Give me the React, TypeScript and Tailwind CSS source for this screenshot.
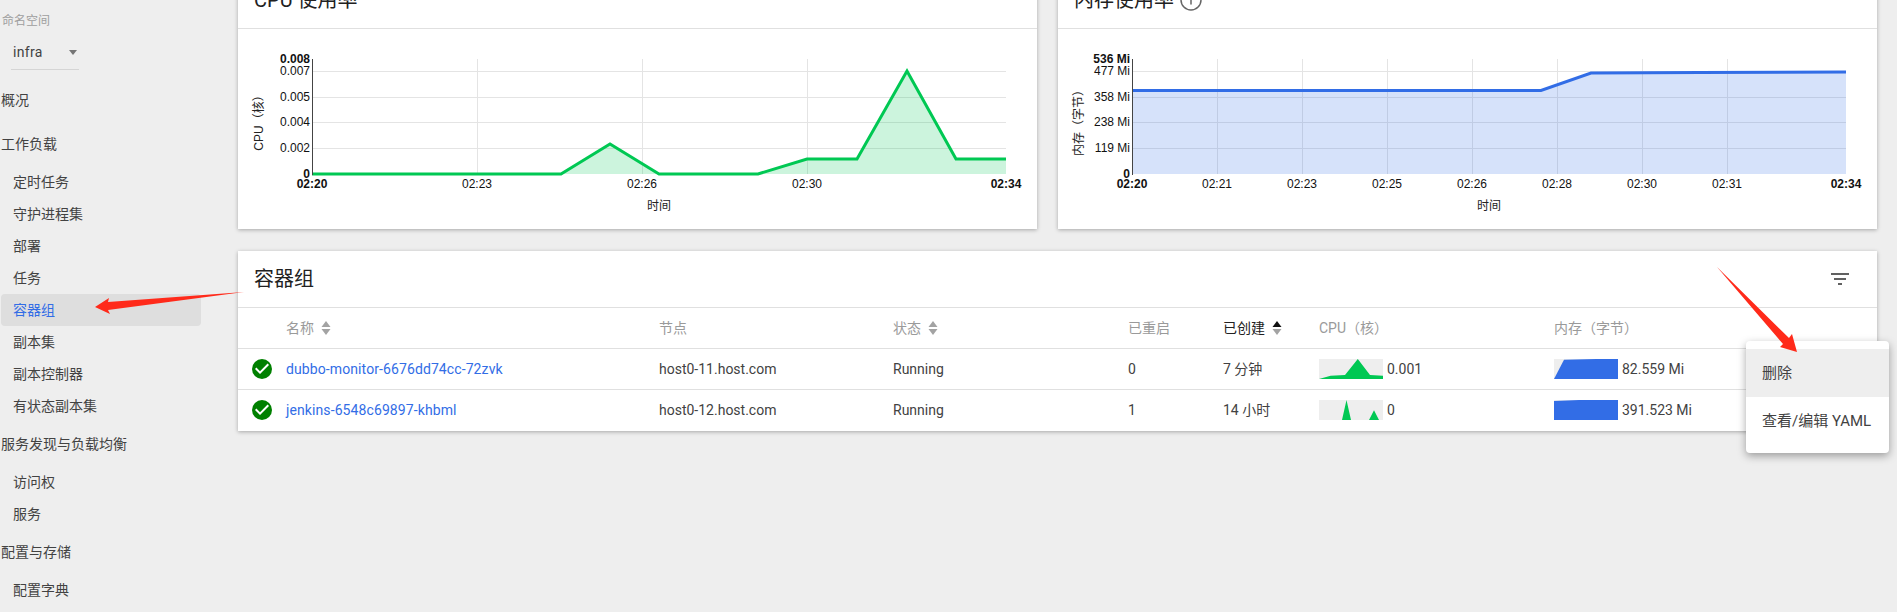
import React from 'react';
import { Info } from 'lucide-react';

const GREEN = '#00c853';
const BLUE = '#326de6';

interface ChartProps {
  box: string;
  color: string;
  yTitle: string;
  left: number;
  right: number;
  yTicks: { y: number; label: string; bold?: boolean }[];
  xTicks: { x: number; label: string; bold?: boolean }[];
  hLines: number[];
  points: [number, number][];
}

function UsageChart({ box, color, yTitle, left, right, yTicks, xTicks, hLines, points }: ChartProps) {
  const top = 59;
  const bottom = 174;
  const line = points.map(p => p.join(',')).join(' ');
  const last = points[points.length - 1];
  const area = `${left},${bottom} ${line} ${last[0]},${bottom}`;

  return (
    <svg viewBox={box} className="block h-[200px] w-full font-['Liberation_Sans','Noto_Sans_CJK_SC',sans-serif] text-[12px]">
      {hLines.map(y => (
        <line key={y} x1={left} x2={right} y1={y + 0.5} y2={y + 0.5} stroke="#e4e4e4" />
      ))}
      {xTicks.filter(t => !t.bold).map(t => (
        <line key={t.x} x1={t.x + 0.5} x2={t.x + 0.5} y1={top} y2={bottom} stroke="#e4e4e4" />
      ))}
      <polygon points={area} fill={color} fillOpacity={0.2} />
      <polyline points={line} fill="none" stroke={color} strokeWidth={3} />
      <line x1={left + 0.5} x2={left + 0.5} y1={top} y2={bottom + 1} stroke="#444" />
      {yTicks.map(t => (
        <text key={t.label} x={left - 2} y={t.y + 4} textAnchor="end" fill="#111" fontWeight={t.bold ? 700 : 400}>
          {t.label}
        </text>
      ))}
      {xTicks.map(t => (
        <text key={t.label} x={t.x} y={188} textAnchor="middle" fill="#111" fontWeight={t.bold ? 700 : 400}>
          {t.label}
        </text>
      ))}
      <text x={(left + right) / 2} y={210} textAnchor="middle" fill="#222">时间</text>
      <text
        transform={`translate(${left - 49} 120) rotate(-90)`}
        textAnchor="middle"
        fill="#222"
      >
        {yTitle}
      </text>
    </svg>
  );
}

function Card({ className = '', children }: { className?: string; children: React.ReactNode }) {
  return (
    <div className={`bg-white shadow-[0_1px_4px_rgba(0,0,0,0.3)] ${className}`}>
      {children}
    </div>
  );
}

function CardTitle({ children }: { children: React.ReactNode }) {
  return (
    <div className="flex h-[57px] items-center border-b border-[#e0e0e0] pl-4 pr-[27px] text-[20px] text-[#212121]">
      {children}
    </div>
  );
}

function NavHeader({ label }: { label: string }) {
  return <div className="flex h-11 items-center text-[#424242]">{label}</div>;
}

function NavItem({ label, active }: { label: string; active?: boolean }) {
  return (
    <div className={`flex h-8 items-center rounded-sm pl-3 ${active ? 'bg-[#dedede] text-[#326de6]' : 'text-[#424242]'}`}>
      {label}
    </div>
  );
}

function SortIcon({ active }: { active?: boolean }) {
  return (
    <svg width="10" height="15" viewBox="0 0 10 15" className="ml-[7px]">
      <path d="M5 0l4.5 6h-9z" fill={active ? '#111' : '#a3a3a3'} />
      <path d="M5 14l4.5-6h-9z" fill="#a3a3a3" />
    </svg>
  );
}

function StatusIcon() {
  return (
    <svg width="24" height="24" viewBox="0 0 24 24">
      <circle cx="12" cy="12" r="10" fill="#008000" />
      <path d="M10 17l-5-5 1.41-1.41L10 14.17l7.59-7.59L19 8l-9 9z" fill="#fff" />
    </svg>
  );
}

function Spark({ points, color }: { points: string; color: string }) {
  return (
    <svg width="64" height="20" viewBox="0 0 64 20" className="mr-1 bg-[#eeeeee]">
      <polygon points={points} fill={color} />
    </svg>
  );
}

const rows = [
  {
    name: 'dubbo-monitor-6676dd74cc-72zvk',
    node: 'host0-11.host.com',
    restarts: '0',
    created: '7 分钟',
    cpu: '0.001',
    mem: '82.559 Mi',
    cpuSpark: '0,20 11.6,16.7 26,16 38.8,0 51,16 64,16.7 64,20',
    memSpark: '0,20 10,0.7 42,0 64,0 64,20',
  },
  {
    name: 'jenkins-6548c69897-khbml',
    node: 'host0-12.host.com',
    restarts: '1',
    created: '14 小时',
    cpu: '0',
    mem: '391.523 Mi',
    cpuSpark: '23,20 27.5,0 32,20 50,20 55,10.3 60,20',
    memSpark: '0,1 25,0 64,0 64,20 0,20',
  },
];

export default function App() {
  return (
    <div className="relative flex h-[612px] w-[1897px] overflow-hidden bg-[#eeeeee] font-['Roboto','Noto_Sans_CJK_SC',sans-serif] text-[14px]">
      {/* Sidebar */}
      <aside className="w-[238px] shrink-0 pl-px">
        <div className="w-[200px]">
          <div className="mt-3 flex h-[18px] items-center pl-px text-[12px] text-[#9e9e9e]">命名空间</div>
          <div className="ml-[10px] flex h-10 w-[68px] items-center justify-between border-b border-[#d5d5d5] px-[2px] pt-[6px] text-[#424242]">
            <span className="tracking-[0.3px]">infra</span>
            <span className="h-0 w-0 border-x-[4.5px] border-t-[5px] border-x-transparent border-t-[#757575]" />
          </div>
          <div className="h-2" />
          <NavHeader label="概况" />
          <NavHeader label="工作负载" />
          <NavItem label="定时任务" />
          <NavItem label="守护进程集" />
          <NavItem label="部署" />
          <NavItem label="任务" />
          <NavItem label="容器组" active />
          <NavItem label="副本集" />
          <NavItem label="副本控制器" />
          <NavItem label="有状态副本集" />
          <NavHeader label="服务发现与负载均衡" />
          <NavItem label="访问权" />
          <NavItem label="服务" />
          <NavHeader label="配置与存储" />
          <NavItem label="配置字典" />
        </div>
      </aside>

      {/* Main content, scrolled so the chart headers are cut off at the top */}
      <main className="-mt-[28px] flex w-[1639px] shrink-0 flex-col gap-[22px]">
        <div className="flex gap-[21px]">
          <Card className="w-[799px]">
            <CardTitle>CPU 使用率</CardTitle>
            <UsageChart
              box="238 29 799 200"
              color={GREEN}
              yTitle="CPU（核）"
              left={312}
              right={1006}
              hLines={[71, 97, 122, 148]}
              yTicks={[
                { y: 59, label: '0.008', bold: true },
                { y: 71, label: '0.007' },
                { y: 97, label: '0.005' },
                { y: 122, label: '0.004' },
                { y: 148, label: '0.002' },
                { y: 174, label: '0', bold: true },
              ]}
              xTicks={[
                { x: 312, label: '02:20', bold: true },
                { x: 477, label: '02:23' },
                { x: 642, label: '02:26' },
                { x: 807, label: '02:30' },
                { x: 1006, label: '02:34', bold: true },
              ]}
              points={[[312, 174], [561, 174], [610, 144], [659, 174], [758, 174], [807, 159], [857, 159], [907, 71], [956, 159], [1006, 159]]}
            />
          </Card>
          <Card className="w-[819px]">
            <CardTitle>
              内存使用率
              <Info className="ml-[5px] text-[#666666]" size={24} strokeWidth={1.5} />
            </CardTitle>
            <UsageChart
              box="1058 29 819 200"
              color={BLUE}
              yTitle="内存（字节）"
              left={1132}
              right={1846}
              hLines={[71, 97, 122, 148]}
              yTicks={[
                { y: 59, label: '536 Mi', bold: true },
                { y: 71, label: '477 Mi' },
                { y: 97, label: '358 Mi' },
                { y: 122, label: '238 Mi' },
                { y: 148, label: '119 Mi' },
                { y: 174, label: '0', bold: true },
              ]}
              xTicks={[
                { x: 1132, label: '02:20', bold: true },
                { x: 1217, label: '02:21' },
                { x: 1302, label: '02:23' },
                { x: 1387, label: '02:25' },
                { x: 1472, label: '02:26' },
                { x: 1557, label: '02:28' },
                { x: 1642, label: '02:30' },
                { x: 1727, label: '02:31' },
                { x: 1846, label: '02:34', bold: true },
              ]}
              points={[[1132, 90.5], [1541, 90.5], [1591, 73], [1700, 72.5], [1846, 72]]}
            />
          </Card>
        </div>

        <Card>
          <div className="flex h-[57px] items-center justify-between border-b border-[#e0e0e0] pl-4 pr-[28px] text-[20px] text-[#212121]">
            <span>容器组</span>
            <svg width="18" height="12" viewBox="3 6 18 12" fill="#616161">
              <path d="M10 18h4v-2h-4v2zM3 6v2h18V6H3zm3 7h12v-2H6v2z" />
            </svg>
          </div>
          <div className="flex h-[41px] items-center border-b border-[#e0e0e0] text-[#9a9a9a]">
            <div className="flex w-[421px] items-center pl-[48px]">名称<SortIcon /></div>
            <div className="w-[234px]">节点</div>
            <div className="flex w-[235px] items-center">状态<SortIcon /></div>
            <div className="w-[95px]">已重启</div>
            <div className="flex w-[96px] items-center text-[#212121]">已创建<SortIcon active /></div>
            <div className="w-[235px]">CPU（核）</div>
            <div>内存（字节）</div>
          </div>
          {rows.map((row, i) => (
            <div
              key={row.name}
              className={`flex h-[41px] items-center border-b text-[#424242] ${i === 0 ? 'border-[#e0e0e0]' : 'border-transparent'}`}
            >
              <div className="flex w-[421px] items-center pl-3">
                <StatusIcon />
                <span className="ml-3 tracking-[0.1px] text-[#326de6]">{row.name}</span>
              </div>
              <div className="w-[234px]">{row.node}</div>
              <div className="w-[235px]">Running</div>
              <div className="w-[95px]">{row.restarts}</div>
              <div className="w-[96px]">{row.created}</div>
              <div className="flex w-[235px] items-center">
                <Spark points={row.cpuSpark} color={GREEN} />
                {row.cpu}
              </div>
              <div className="flex items-center">
                <Spark points={row.memSpark} color={BLUE} />
                {row.mem}
              </div>
            </div>
          ))}
        </Card>
      </main>

      {/* Open row menu */}
      <div className="absolute left-[1746px] top-[341px] w-[143px] rounded-sm bg-white py-2 text-[15px] text-[#424242] shadow-[0_3px_8px_rgba(0,0,0,0.35)]">
        <div className="flex h-12 items-center bg-[#eeeeee] pl-4">删除</div>
        <div className="flex h-12 items-center pl-4">查看/编辑 YAML</div>
      </div>

      {/* Red annotation arrows */}
      <svg className="pointer-events-none absolute left-0 top-0" width="1897" height="612" viewBox="0 0 1897 612" fill="#ff2a1a">
        <polygon points="95,307 109,298 108,302 244,292 108,310 110,314" />
        <polygon points="1717,267 1789,338 1792,334 1797,352 1780,347 1783,344" />
      </svg>
    </div>
  );
}
